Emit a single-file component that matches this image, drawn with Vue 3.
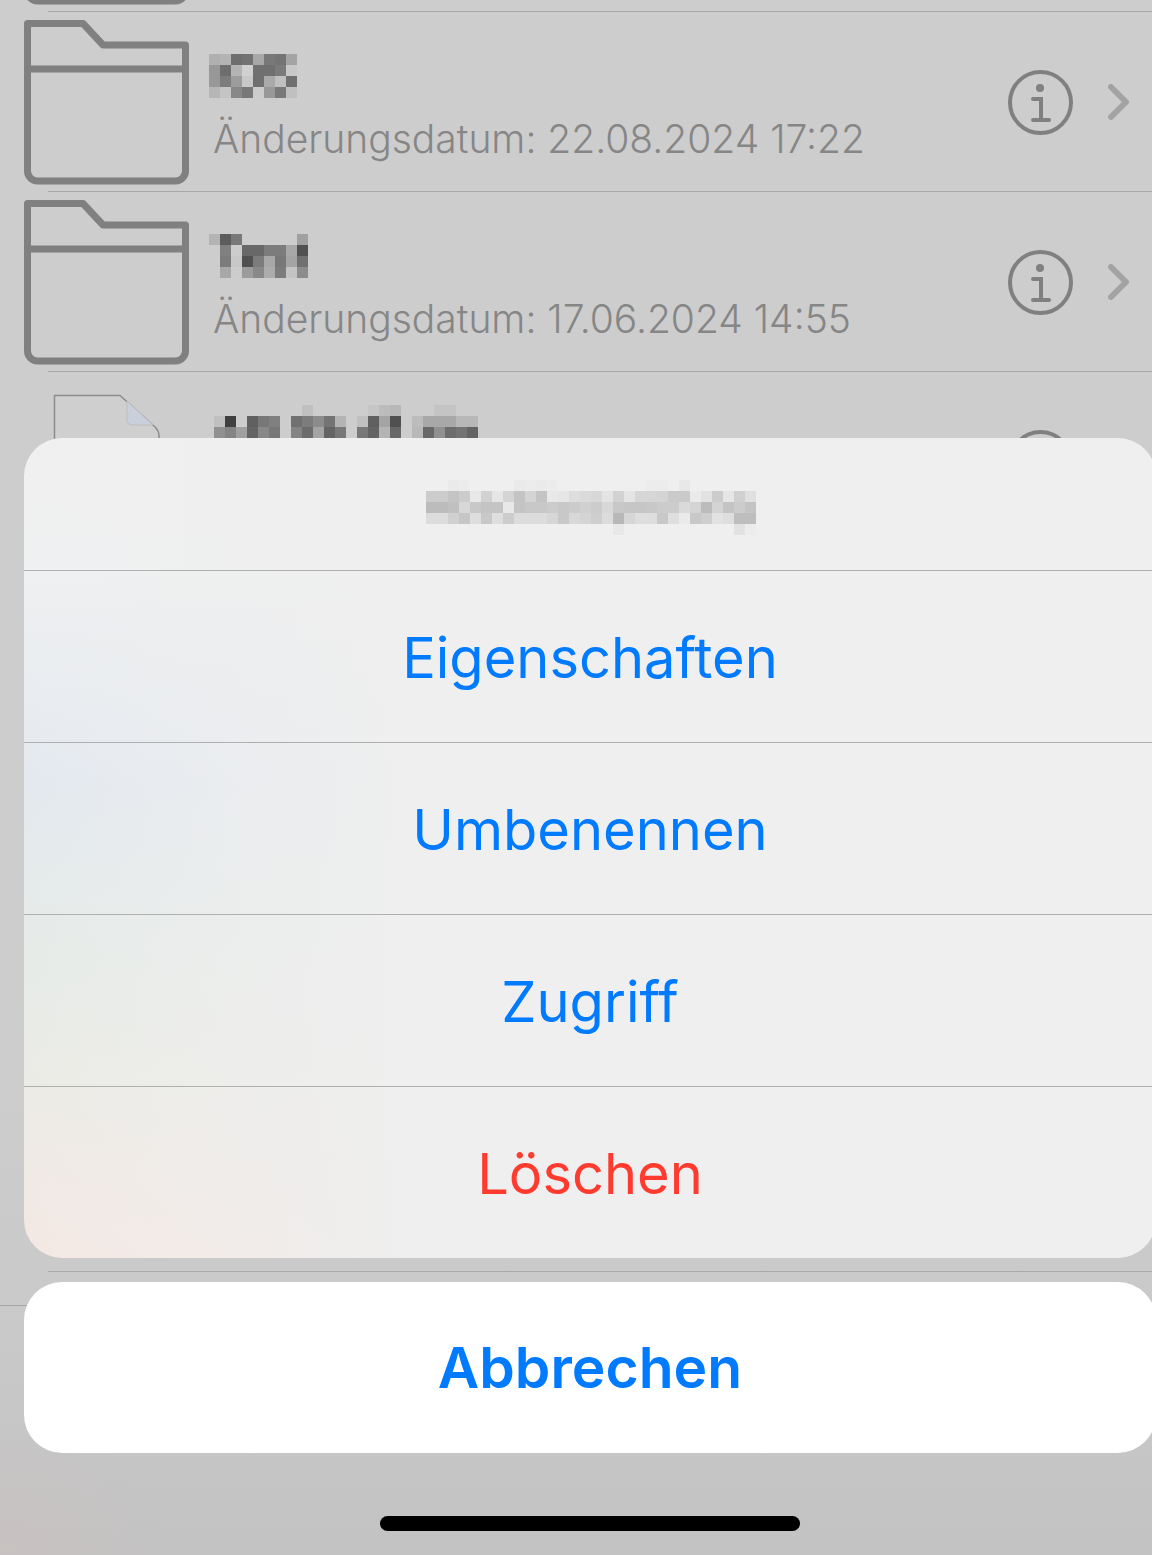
<script setup>
const folderRows = { ios: 'ios', test: 'test' }

const rows = [
  { id: 0, kind: 'folder' },
  { id: 1, kind: 'folder', blur: folderRows.ios, date: 'Änderungsdatum: 22.08.2024 17:22' },
  { id: 2, kind: 'folder', blur: folderRows.test, date: 'Änderungsdatum: 17.06.2024 14:55' },
  { id: 3, kind: 'file', blur: 'file' },
  { id: 4 },
  { id: 5 },
  { id: 6 },
  { id: 7 },
  { id: 8 },
]

// pixelated names, one string per row, '--' is see-through
const mosaics = {
  ios: [
    'b0 b4 6e 72 a8 78 74 a4',
    '98 6e b4 d0 70 70 7a c8',
    '98 7c 9c c8 70 aa c0 70',
    'b6 c4 88 78 cc 98 78 c0',
  ],
  test: [
    'b4 5c 78 -- -- -- -- -- a0',
    '-- 80 cc 68 68 7c 7c a8 50',
    '-- 7c c8 50 7c a8 78 a4 70',
    '-- a8 cc 9c 88 ac 7c c4 8c',
  ],
  file: [
    '-- -- -- -- -- -- -- -- c0 -- -- -- -- -- c6 bc b8 -- -- -- c4 c4 -- --',
    'c0 40 -- 60 78 80 -- 70 7c 8c 74 b4 -- c0 60 a4 50 -- bc a8 a8 a8 b8 b8',
    '90 84 a0 64 88 78 -- 84 6c a4 64 78 -- 78 64 b4 68 -- b8 68 90 6c 74 64',
  ],
  title: [
    '-- -- ea ec -- -- -- -- ea ec ea ec -- -- -- -- -- -- -- -- ec ec -- e8 -- -- -- -- -- --',
    'cc cc c4 cc e8 d2 e6 d4 c4 d4 c4 e8 e6 de da d8 e4 d2 e4 d6 d6 d4 ca ca ea e2 cc e6 d0 e0',
    'bc bc c0 d8 c8 c4 c4 e8 c4 c8 c8 cc c8 cc d0 cc d8 c8 c6 c6 c8 cc cc da d4 bc d4 c4 cc c4',
    'dc dc d0 c6 de c8 de cc dc dc dc d6 c8 d8 d4 ce dc b8 d6 de de c8 de ea c8 ce e2 de be be',
    '-- -- -- -- -- -- -- -- -- -- -- -- -- -- -- -- -- e8 -- -- -- -- -- -- -- -- -- -- e2 ec',
  ],
}

const cells = (name) => mosaics[name].flatMap((line) => line.split(' '))
const cols = (name) => mosaics[name][0].split(' ').length
const shade = (v) => (v === '--' ? 'transparent' : `#${v}${v}${v}`)

const actions = [
  { label: 'Eigenschaften' },
  { label: 'Umbenennen' },
  { label: 'Zugriff' },
  { label: 'Löschen', danger: true },
]
</script>

<template>
  <div class="screen">
    <div class="list">
      <div v-for="row in rows" :key="row.id" class="row">
        <svg v-if="row.kind === 'folder'" class="folder" width="165" height="165" viewBox="0 0 165 165">
          <path
            d="M3.5 3.5H59L79 25H161.5V151a10 10 0 0 1-10 10H13.5a10 10 0 0 1-10-10ZM3.5 49H161.5"
            fill="none"
            stroke="#808080"
            stroke-width="7"
            stroke-linejoin="round"
          />
        </svg>
        <svg v-else-if="row.kind === 'file'" class="doc" width="165" height="160" viewBox="0 0 165 160">
          <path d="M30.5 1.5H96L131 33Q135 37 135 42V160H30.5Z" fill="#cfcfcf" stroke="#8c8c8c" stroke-width="1.5" />
          <path d="M103 7V26Q103 31 109 31H129Z" fill="#c9d0db" stroke="#bdbdbd" />
        </svg>
        <div v-if="row.kind" class="text">
          <div
            v-if="row.blur"
            class="mosaic"
            :class="{ 'mosaic-file': row.kind === 'file' }"
            :style="{ gridTemplateColumns: `repeat(${cols(row.blur)}, 11px)` }"
          >
            <i v-for="(c, n) in cells(row.blur)" :key="n" :style="{ background: shade(c) }"></i>
          </div>
          <div v-if="row.date" class="date">{{ row.date }}</div>
        </div>
        <svg v-if="row.kind && row.id" class="info" width="66" height="66" viewBox="0 0 66 66">
          <circle cx="32.5" cy="32.5" r="30.5" fill="none" stroke="#808080" stroke-width="4" />
          <circle cx="32" cy="18" r="4" fill="#808080" />
          <path d="M25 29H33V50M25 50H41" fill="none" stroke="#808080" stroke-width="4" stroke-linecap="round" />
        </svg>
        <svg v-if="row.kind && row.id" class="chev" width="24" height="38" viewBox="0 0 24 38">
          <path d="M3 3L18 18 3 33" fill="none" stroke="#a3a3a3" stroke-width="6" stroke-linecap="round" stroke-linejoin="round" />
        </svg>
      </div>
    </div>
    <div class="tabbar"></div>

    <div class="overlay">
      <div class="sheet">
        <div class="sheet-title">
          <div class="mosaic" :style="{ gridTemplateColumns: `repeat(${cols('title')}, 11px)` }">
            <i v-for="(c, n) in cells('title')" :key="n" :style="{ background: shade(c) }"></i>
          </div>
        </div>
        <div v-for="a in actions" :key="a.label" class="action" :class="{ danger: a.danger }">{{ a.label }}</div>
      </div>
      <div class="cancel">Abbrechen</div>
      <div class="home-bar"></div>
    </div>
  </div>
</template>

<style>
html,
body {
  margin: 0;
  background: #c6c6c6;
}
</style>

<style scoped>
.screen {
  position: relative;
  width: 1152px;
  height: 1555px;
  overflow: hidden;
  font-family: Inter, "Liberation Sans", sans-serif;
  background:
    radial-gradient(ellipse 170px 130px at 0 100%, rgba(208, 192, 190, 0.4), rgba(208, 192, 190, 0)),
    linear-gradient(#cdcdcd, #cdcdcd 70%, #c9c9c9 85%, #c3c3c3);
}

.list {
  height: 1473px;
  margin-top: -168px;
  overflow: hidden;
}

.row {
  display: flex;
  align-items: flex-start;
  box-sizing: border-box;
  height: 180px;
  padding-left: 24px;
  background: linear-gradient(#a8a8a8, #a8a8a8) no-repeat 48px 100% / 100% 1px;
}

.folder {
  flex: none;
  margin-top: 8px;
}

.doc {
  flex: none;
  margin-top: 22px;
}

.text {
  flex: 1;
  padding: 42px 0 0 20px;
}

.mosaic {
  display: grid;
  grid-auto-rows: 11px;
}

.mosaic i {
  display: block;
}

.mosaic-file {
  margin: -9px 0 0 5px;
}

.date {
  margin: 18px 0 0 4px;
  font-size: 39px;
  font-weight: 300;
  line-height: 46px;
  color: #868686;
  white-space: nowrap;
}

.info {
  flex: none;
  margin: 58px 0 0;
}

.chev {
  flex: none;
  margin: 72px 20px 0 34px;
}

.tabbar {
  height: 82px;
  border-top: 1px solid #a6a6a6;
}

.overlay {
  position: absolute;
  top: 438px;
  left: 24px;
  display: flex;
  flex-direction: column;
  width: 1132px;
}

.sheet {
  height: 820px;
  border-radius: 38px;
  overflow: hidden;
  background:
    linear-gradient(to right, rgba(239, 239, 239, 0), #efefef 34%),
    linear-gradient(#f0f0f0, #eff0f1 16%, #e4e9ef 42%, #e6ebe8 62%, #ebebe6 78%, #f4e8e3 100%);
}

.sheet-title {
  display: flex;
  align-items: flex-start;
  justify-content: center;
  box-sizing: border-box;
  height: 133px;
  padding: 42px 0 0 2px;
  border-bottom: 1px solid #b0b0b0;
}

.action {
  box-sizing: border-box;
  height: 172px;
  border-bottom: 1px solid #b0b0b0;
  font-size: 56px;
  line-height: 174px;
  text-align: center;
  color: #007aff;
}

.action:last-child {
  height: 171px;
  border-bottom: 0;
}

.danger {
  color: #ff3b30;
}

.cancel {
  height: 171px;
  margin-top: 24px;
  border-radius: 38px;
  background: #fff;
  font-size: 57px;
  font-weight: 600;
  line-height: 172px;
  text-align: center;
  color: #007aff;
}

.home-bar {
  align-self: center;
  width: 420px;
  height: 15px;
  margin-top: 63px;
  border-radius: 8px;
  background: #000;
}
</style>
